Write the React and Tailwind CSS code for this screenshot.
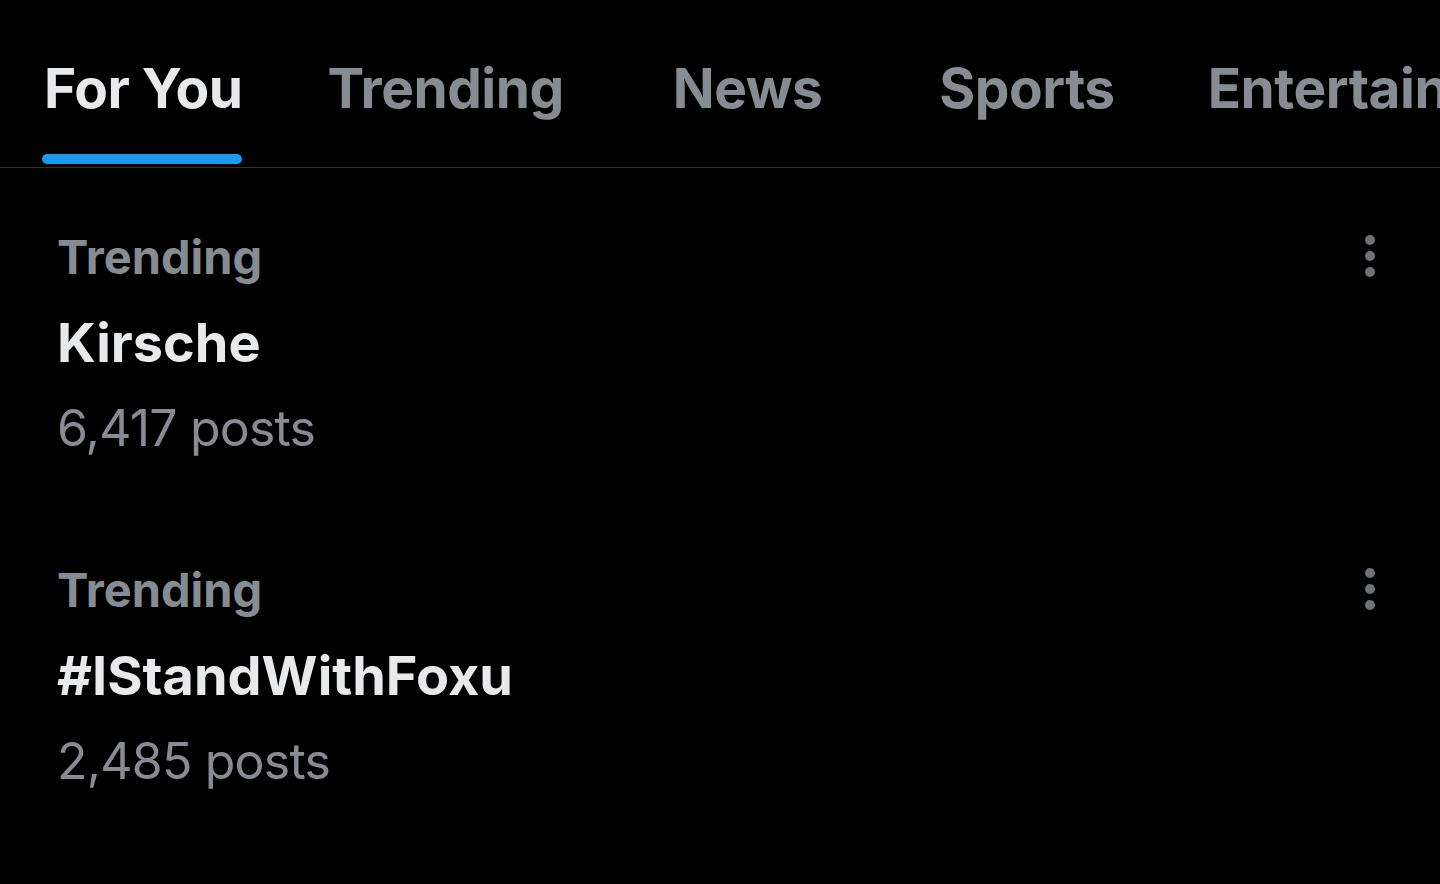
const TABS = [
  { label: "For You", active: true, ml: "ml-[44px]" },
  { label: "Trending", ml: "ml-[85px]" },
  { label: "News", ml: "ml-[109px]" },
  { label: "Sports", ml: "ml-[117px]" },
  { label: "Entertainment", ml: "ml-[93px]" },
];

const TRENDS = [
  { topic: "Kirsche", posts: "6,417 posts" },
  { topic: "#IStandWithFoxu", posts: "2,485 posts" },
];

function MoreDots() {
  return (
    <svg width="14" height="46" viewBox="0 0 14 46" className="text-[#6e7378]">
      <circle cx="7" cy="7" r="5" fill="currentColor" />
      <circle cx="7" cy="23" r="5" fill="currentColor" />
      <circle cx="7" cy="39" r="5" fill="currentColor" />
    </svg>
  );
}

export default function App() {
  return (
    <div className="h-[884px] w-[1440px] overflow-hidden bg-black font-['Inter',sans-serif]">
      <nav className="flex h-[168px] items-start overflow-hidden whitespace-nowrap border-b border-[#2f3336]">
        {TABS.map((tab) => (
          <div key={tab.label} className={`${tab.ml} flex shrink-0 flex-col`}>
            <span
              className={`mt-[52px] text-[55px] font-bold leading-[72px] tracking-[-0.5px] ${
                tab.active ? "text-[#e7e9ea]" : "text-[#878c92]"
              }`}
            >
              {tab.label}
            </span>
            {tab.active ? <div className="mt-[30px] -ml-[2px] h-[10px] w-[200px] rounded-full bg-[#1d9bf0]" /> : null}
          </div>
        ))}
      </nav>

      <div className="pt-[59px]">
        {TRENDS.map((trend) => (
          <div key={trend.topic} className="flex h-[333px] items-start justify-between pl-[57px] pr-[63px]">
            <div className="flex flex-col">
              <span className="text-[47px] font-bold leading-[60px] text-[#878c92]">Trending</span>
              <span className="mt-[23px] text-[54px] font-bold leading-[66px] text-[#e7e9ea]">{trend.topic}</span>
              <span className="mt-[19px] text-[50px] leading-[66px] tracking-[-0.8px] text-[#878c92]">{trend.posts}</span>
            </div>
            <div className="mt-[6px]">
              <MoreDots />
            </div>
          </div>
        ))}
      </div>
    </div>
  );
}
